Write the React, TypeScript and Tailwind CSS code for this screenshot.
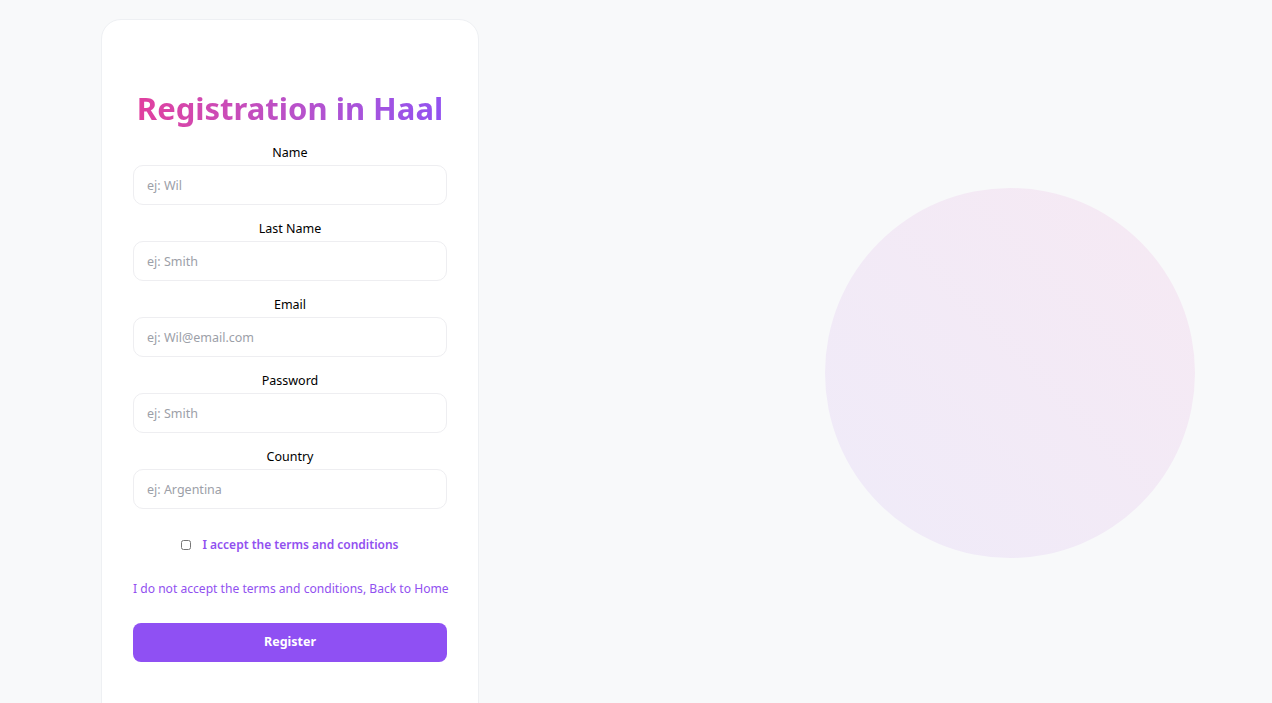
import React from "react";

function Field({ label, placeholder }: { label: string; placeholder: string }) {
  return (
    <div className="flex flex-col items-center">
      <label className="text-[12.5px] leading-[18px] text-black mb-[3px]">{label}</label>
      <input
        type="text"
        placeholder={placeholder}
        className="w-full h-[40px] rounded-[10px] border border-[#eeeef1] bg-white px-[13px] text-[12.5px] text-gray-800 placeholder:text-[#9ca0a8] outline-none"
      />
    </div>
  );
}

export default function App() {
  return (
    <div
      className="w-[1272px] h-[703px] overflow-hidden bg-[#f8f9fa] flex relative"
      style={{ fontFamily: '"Noto Sans", "Open Sans", sans-serif' }}
    >
      <div className="ml-[101px] mt-[19px] w-[378px] h-[720px] bg-white rounded-[20px] border border-[#eef0f3] px-[31px] pt-[68px] flex flex-col">
        <h1 className="text-center text-[31px] leading-[40px] font-bold bg-gradient-to-r from-[#e23e9d] to-[#9152f2] bg-clip-text text-transparent mb-[16px]">
          Registration in Haal
        </h1>
        <div className="flex flex-col gap-[15px]">
          <Field label="Name" placeholder="ej: Wil" />
          <Field label="Last Name" placeholder="ej: Smith" />
          <Field label="Email" placeholder="ej: Wil@email.com" />
          <Field label="Password" placeholder="ej: Smith" />
          <Field label="Country" placeholder="ej: Argentina" />
        </div>
        <div className="flex items-center justify-center gap-[11px] mt-[27px]">
          <input type="checkbox" className="w-[10px] h-[10px] m-0" />
          <span className="text-[12px] font-semibold text-[#9150f0] leading-[18px]">I accept the terms and conditions</span>
        </div>
        <div className="text-center mt-[26px] text-[12.1px] whitespace-nowrap text-[#9150f0] leading-[18px]">
          I do not accept the terms and conditions, Back to Home
        </div>
        <button className="mt-[25px] h-[39px] w-full rounded-[8px] bg-[#8f50f3] text-white text-[12.5px] font-bold">
          Register
        </button>
      </div>
      <div className="absolute left-[825px] top-[188px] w-[370px] h-[370px] rounded-full bg-gradient-to-tr from-[#efebf9] to-[#f6e9f3]" />
    </div>
  );
}
